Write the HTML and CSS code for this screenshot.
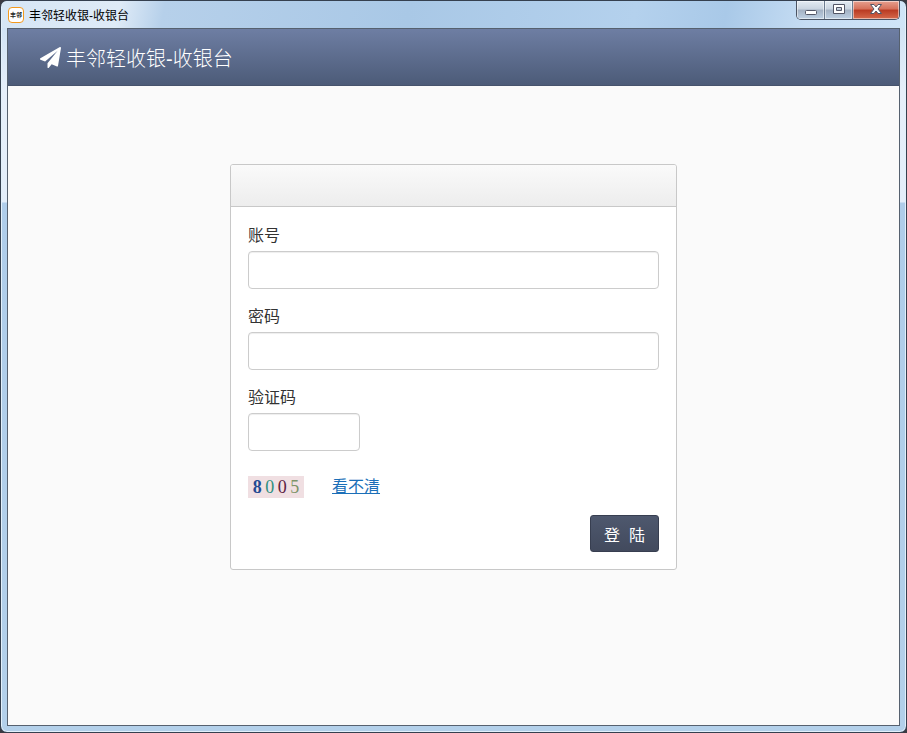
FILE: index.html
```
<!DOCTYPE html>
<html lang="zh-CN">
<head>
    <meta charset="UTF-8">
    <meta name="viewport" content="width=device-width, initial-scale=1.0">
    <title>丰邻轻收银-收银台</title>
    <link rel="stylesheet" href="styles.css">
</head>
<body>
    <div class="window">
        <div class="titlebar">
            <span class="app-icon">丰邻</span>
            <span class="window-title">丰邻轻收银-收银台</span>
            <div class="window-buttons">
                <button type="button" class="win-btn" aria-label="最小化">
                    <svg width="14" height="14" viewBox="0 0 14 14"><rect x="1.5" y="7.5" width="11" height="4" rx="1" fill="#fff" stroke="#535666"/></svg>
                </button>
                <button type="button" class="win-btn" aria-label="最大化">
                    <svg width="14" height="14" viewBox="0 0 14 14"><path d="M1.5 1.5h11v9h-11zM4.500 4.500h5v3h-5z" fill="#fff" fill-rule="evenodd" stroke="#535666"/></svg>
                </button>
                <button type="button" class="win-btn win-close" aria-label="关闭">
                    <svg width="14" height="14" viewBox="0 0 14 14"><path d="M1.500 1.500h3.500l2 2.500 2-2.500h3.500l-3.500 4.500 3.500 4.500H9L7 8l-2 2.500H1.500L5 6z" fill="#fff" stroke="#535666"/></svg>
                </button>
            </div>
        </div>

        <div class="content">
            <header class="navbar">
                <svg class="plane" viewBox="0 0 1792 1792"><path d="M1764 11q33 24 27 64l-256 1536q-5 29-32 45-14 8-31 8-11 0-24-5l-453-185-242 295q-18 23-49 23-13 0-22-4-19-7-30.500-23.500t-11.500-36.500v-349l864-1059-1069 925-395-162q-37-14-40-55-2-40 32-59l1664-960q15-9 32-9 20 0 36 11z" fill="currentColor"/></svg>
                <h1>丰邻轻收银-收银台</h1>
            </header>

            <main>
                <form class="panel">
                    <div class="panel-heading"></div>
                    <div class="panel-body">
                        <div class="form-group">
                            <label for="account">账号</label>
                            <input type="text" id="account" class="form-control">
                        </div>
                        <div class="form-group">
                            <label for="password">密码</label>
                            <input type="password" id="password" class="form-control">
                        </div>
                        <div class="form-group">
                            <label for="code">验证码</label>
                            <input type="text" id="code" class="form-control short">
                        </div>
                        <div class="captcha-row">
                            <span class="captcha"><i class="d1">8</i><i class="d2">0</i><i class="d3">0</i><i class="d4">5</i></span>
                            <a href="#">看不清</a>
                        </div>
                        <div class="actions">
                            <button type="submit" class="btn-login">登  陆</button>
                        </div>
                    </div>
                </form>
            </main>
        </div>
    </div>
</body>
</html>
```
FILE: styles.css
```
* {
    box-sizing: border-box;
}

body {
    margin: 0;
    background-color: #3a3a42;
    font-family: "Liberation Sans", "Noto Sans CJK SC", sans-serif;
    font-size: 16px;
    color: #333;
}

/* window frame */
.window {
    display: flex;
    flex-direction: column;
    min-height: 100vh;
    padding: 0 6px 6px;
    border: 1px solid #35404f;
    border-radius: 7px;
    background: linear-gradient(#c9def2 0, #e6effa 90px, #e3eefa 201px, #afcdea 202px, #b3d0ea 100%);
    box-shadow: inset 0 0 0 1px #e2f0fb;
}

.titlebar {
    display: flex;
    align-items: center;
    height: 27px;
    margin: 0 -5px;
    padding: 0 5px 0 6px;
    border-radius: 6px 6px 0 0;
    background: linear-gradient(100deg, #d6e6f5 0, #dfebf7 13%, #b6d0ea 18%, #a9c8e6 45%, #b4d1ed 70%, #a9c9e8 80%, #c5dcf3 89%, #d0e5f8 100%);
}

.app-icon {
    display: flex;
    align-items: center;
    justify-content: center;
    width: 16px;
    height: 16px;
    margin-right: 5px;
    border: 1px solid #f39a1e;
    border-radius: 4px;
    background-color: #fff;
    font-size: 6px;
    font-weight: bold;
    color: #222;
    white-space: nowrap;
}

.window-title {
    font-size: 12px;
    color: #000;
}

.window-buttons {
    display: flex;
    align-self: flex-start;
    height: 19px;
    margin-left: auto;
    border: 1px solid #4a5363;
    border-top: none;
    border-radius: 0 0 5px 5px;
    overflow: hidden;
}

.win-btn {
    display: flex;
    align-items: center;
    justify-content: center;
    width: 28px;
    padding: 0;
    border: none;
    border-right: 1px solid #6c7c90;
    background: linear-gradient(#e3ebf3 0, #c9d4e0 45%, #a3b1c3 50%, #bed0e3 100%);
    box-shadow: inset 0 0 0 1px rgba(255, 255, 255, 0.5);
}

.win-close {
    width: 46px;
    border-right: none;
    background: linear-gradient(#e6a08f 0, #d5705a 45%, #b93a22 50%, #d66a4c 100%);
}

.content {
    display: flex;
    flex-direction: column;
    flex: 1;
    border: 1px solid #56616f;
    background-color: #fafafa;
}

.navbar {
    display: flex;
    align-items: center;
    height: 57px;
    padding: 0 32px;
    border-bottom: 1px solid #46536c;
    background: linear-gradient(#6e7ea3, #4c5b78);
    color: #fff;
}

.plane {
    width: 21px;
    height: 21px;
    margin-right: 5px;
}

h1 {
    margin: 0;
    font-size: 20px;
    font-weight: 300;
}

main {
    padding: 78px 16px;
}

/* login form */
.panel {
    max-width: 447px;
    margin: 0 auto;
    border: 1px solid #c8c8c8;
    border-radius: 3px;
    background-color: #fff;
}

.panel-heading {
    height: 42px;
    border-bottom: 1px solid #c8c8c8;
    border-radius: 2px 2px 0 0;
    background: linear-gradient(#fafafa, #ededed);
}

.panel-body {
    padding: 17px;
}

.form-group {
    margin-bottom: 16px;
}

label {
    display: block;
    margin-bottom: 3px;
    line-height: 24px;
}

.form-control {
    display: block;
    width: 100%;
    height: 38px;
    padding: 8px 12px;
    border: 1px solid #ccc;
    border-radius: 4px;
    background-color: #fff;
    box-shadow: inset 0 1px 1px rgba(0, 0, 0, 0.07);
    font: inherit;
}

.short {
    width: 112px;
}

.captcha-row {
    display: flex;
    align-items: center;
    gap: 28px;
    padding-top: 9px;
    margin-bottom: 17px;
}

.captcha {
    display: flex;
    justify-content: space-around;
    width: 56px;
    height: 22px;
    padding: 0 3px;
    background-color: #f0dfe2;
    font-family: "Liberation Serif", serif;
    font-size: 18px;
    line-height: 23px;
}

.captcha i {
    font-style: normal;
}

.d1 {
    color: #234a92;
    font-weight: bold;
}

.d2 {
    color: #2e8f7e;
}

.d3 {
    color: #5c2244;
}

.d4 {
    color: #7c9468;
}

a {
    color: #1b6fb8;
    line-height: 22px;
}

.actions {
    display: flex;
    justify-content: flex-end;
}

.btn-login {
    height: 37px;
    padding: 0 13px;
    border: 1px solid #373e50;
    border-radius: 3px;
    background: linear-gradient(#4e586e, #424a5d);
    color: #fff;
    font: inherit;
    white-space: pre;
}
```
